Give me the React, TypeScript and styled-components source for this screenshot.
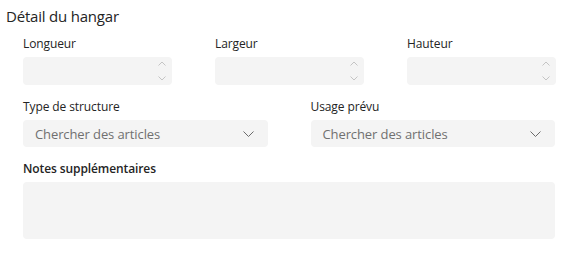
import React from "react";
import styled, { createGlobalStyle } from "styled-components";

const GlobalStyle = createGlobalStyle`
  body {
    margin: 0;
    background: #ffffff;
    font-family: "Open Sans", "Noto Sans", sans-serif;
    color: #242424;
  }
`;

const Page = styled.div`
  width: 573px;
  height: 263px;
  padding: 5px 18px 0 6px;
  box-sizing: border-box;
`;

const Title = styled.h2`
  margin: 0;
  font-size: 15px;
  font-weight: 400;
  line-height: 22px;
  letter-spacing: -0.2px;
`;

const Form = styled.div`
  display: flex;
  flex-direction: column;
  gap: 14px;
  padding-left: 17px;
  margin-top: 9px;
`;

const Row = styled.div<{ cols: number }>`
  display: grid;
  grid-template-columns: repeat(${({ cols }) => cols}, ${({ cols }) => (cols === 3 ? "149px" : "1fr")});
  justify-content: space-between;
  column-gap: 43px;
`;

const Field = styled.div`
  display: flex;
  flex-direction: column;
  gap: 5px;
`;

const Label = styled.label<{ strong?: boolean }>`
  font-size: 12px;
  line-height: 16px;
  font-weight: ${({ strong }) => (strong ? 600 : 400)};
  letter-spacing: -0.1px;
`;

const Box = styled.div<{ h: number }>`
  height: ${({ h }) => h}px;
  background: #f4f4f4;
  border-radius: 4px;
  display: flex;
  align-items: center;
  justify-content: space-between;
  box-sizing: border-box;
`;

const Spinner = styled.div`
  display: flex;
  flex-direction: column;
  gap: 10px;
  padding-right: 6px;
`;

const Placeholder = styled.span`
  padding-left: 12px;
  font-size: 13px;
  color: #707070;
  letter-spacing: -0.1px;
`;

const ChevronWrap = styled.span`
  display: flex;
  padding-right: 14px;
`;

const Arrow = ({ up }: { up?: boolean }) => (
  <svg width="8" height="5" viewBox="0 0 8 5">
    <path
      d={up ? "M0.5 4.5 L4 1 L7.5 4.5" : "M0.5 0.5 L4 4 L7.5 0.5"}
      fill="none"
      stroke="#c4c4c4"
      strokeWidth="1"
    />
  </svg>
);

const NumberInput = ({ label }: { label: string }) => (
  <Field>
    <Label>{label}</Label>
    <Box h={28}>
      <span />
      <Spinner>
        <Arrow up />
        <Arrow />
      </Spinner>
    </Box>
  </Field>
);

const Select = ({ label }: { label: string }) => (
  <Field>
    <Label>{label}</Label>
    <Box h={27}>
      <Placeholder>Chercher des articles</Placeholder>
      <ChevronWrap>
        <svg width="11" height="6" viewBox="0 0 11 6">
          <path d="M0.5 0.5 L5.5 5.5 L10.5 0.5" fill="none" stroke="#6b6b6b" strokeWidth="1" />
        </svg>
      </ChevronWrap>
    </Box>
  </Field>
);

export default function App() {
  return (
    <>
      <GlobalStyle />
      <Page>
        <Title>Détail du hangar</Title>
        <Form>
          <Row cols={3}>
            <NumberInput label="Longueur" />
            <NumberInput label="Largeur" />
            <NumberInput label="Hauteur" />
          </Row>
          <Row cols={2}>
            <Select label="Type de structure" />
            <Select label="Usage prévu" />
          </Row>
          <Field>
            <Label strong>Notes supplémentaires</Label>
            <Box h={57} />
          </Field>
        </Form>
      </Page>
    </>
  );
}
